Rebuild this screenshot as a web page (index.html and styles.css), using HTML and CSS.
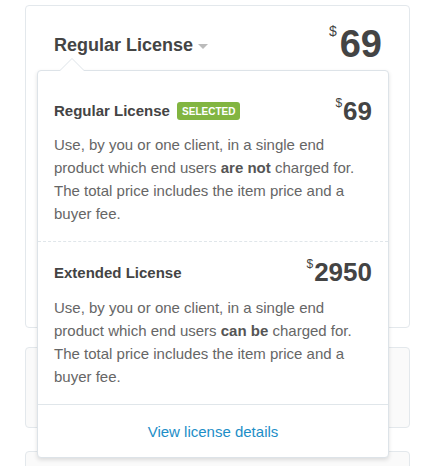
FILE: index.html
```html
<!DOCTYPE html>
<html lang="en">
<head>
    <meta charset="utf-8">
    <title>License</title>
    <link rel="stylesheet" href="styles.css">
</head>
<body>
    <div class="sidebar">
        <div class="card purchase">
            <div class="purchase-head">
                <div class="license-toggle">Regular License <span class="caret"></span></div>
                <div class="price big"><sup>$</sup>69</div>
            </div>

            <div class="license-menu">
                <div class="option">
                    <div class="option-head">
                        <div class="option-name">Regular License <span class="badge">Selected</span></div>
                        <div class="price"><sup>$</sup>69</div>
                    </div>
                    <p class="option-text">Use, by you or one client, in a single end product which end users <b>are not</b> charged for. The total price includes the item price and a buyer fee.</p>
                </div>
                <div class="option">
                    <div class="option-head">
                        <div class="option-name">Extended License</div>
                        <div class="price"><sup>$</sup>2950</div>
                    </div>
                    <p class="option-text">Use, by you or one client, in a single end product which end users <b>can be</b> charged for. The total price includes the item price and a buyer fee.</p>
                </div>
                <div class="menu-foot">
                    <a href="#">View license details</a>
                </div>
            </div>
        </div>
        <div class="card grey"></div>
        <div class="card grey last"></div>
    </div>
</body>
</html>
```

FILE: styles.css
```css
body {
    margin: 0;
    background: #fff;
    font-family: "Liberation Sans", Arial, sans-serif;
    color: #444;
}
.sidebar {
    width: 385px;
    padding: 5px 0 0 25px;
}
.card {
    border: 1px solid #e3e8ec;
    border-radius: 4px;
    box-sizing: border-box;
}
.purchase {
    position: relative;
    height: 323px;
    background: #fff;
}
.grey {
    height: 81px;
    margin-top: 19px;
    background: #fafafa;
}
.grey.last {
    margin-top: 23px;
}

.purchase-head {
    display: flex;
    justify-content: space-between;
    align-items: flex-start;
    padding: 19px 27px 0 28px;
}
.license-toggle {
    margin-top: 10px;
    font-size: 18px;
    font-weight: bold;
    color: #444;
}
.caret {
    display: inline-block;
    width: 0;
    height: 0;
    margin-left: 0;
    vertical-align: middle;
    border-left: 5px solid transparent;
    border-right: 5px solid transparent;
    border-top: 5px solid #bbb;
}

.price {
    font-size: 26px;
    font-weight: bold;
    color: #444;
    line-height: 1;
}
.price sup {
    font-size: 12px;
    font-weight: normal;
    vertical-align: top;
    position: relative;
    top: -1px;
    margin-right: 1px;
}
.price.big {
    font-size: 38px;
}
.price.big sup {
    font-size: 14px;
    margin-right: 3px;
}

.license-menu {
    position: absolute;
    left: 11px;
    top: 64px;
    width: 352px;
    background: #fff;
    border: 1px solid #dde3e8;
    border-radius: 4px;
    box-shadow: 0 2px 4px rgba(0, 0, 0, 0.12);
    box-sizing: border-box;
}
.license-menu:before,
.license-menu:after {
    content: "";
    position: absolute;
    left: 21px;
    width: 0;
    height: 0;
    border-left: 13px solid transparent;
    border-right: 13px solid transparent;
    border-bottom: 13px solid #dde3e8;
    top: -13px;
}
.license-menu:after {
    left: 22px;
    top: -12px;
    border-left-width: 12px;
    border-right-width: 12px;
    border-bottom: 12px solid #fff;
}

.option {
    padding: 27px 16px 16px 16px;
    border-bottom: 1px dashed #e0e6ea;
}
.option + .option {
    padding-top: 17px;
    border-bottom: 1px solid #e0e6ea;
}
.option-head {
    display: flex;
    justify-content: space-between;
    align-items: center;
}
.option-name {
    font-size: 15px;
    font-weight: bold;
    color: #444;
}
.badge {
    display: inline-block;
    margin-left: 3px;
    padding: 4px 5px 3px;
    border-radius: 3px;
    background: #82b541;
    color: #fff;
    font-size: 10px;
    font-weight: bold;
    text-transform: uppercase;
    vertical-align: 1px;
}
.option-text {
    margin: 9px 0 0;
    font-size: 15px;
    line-height: 23px;
    color: #666;
}
.option + .option .option-text {
    margin-top: 11px;
}
.option-text b {
    color: #555;
}
.menu-foot {
    height: 52px;
    display: flex;
    align-items: center;
    justify-content: center;
}
.menu-foot a {
    font-size: 15px;
    color: #1d8ec7;
    text-decoration: none;
}
```
